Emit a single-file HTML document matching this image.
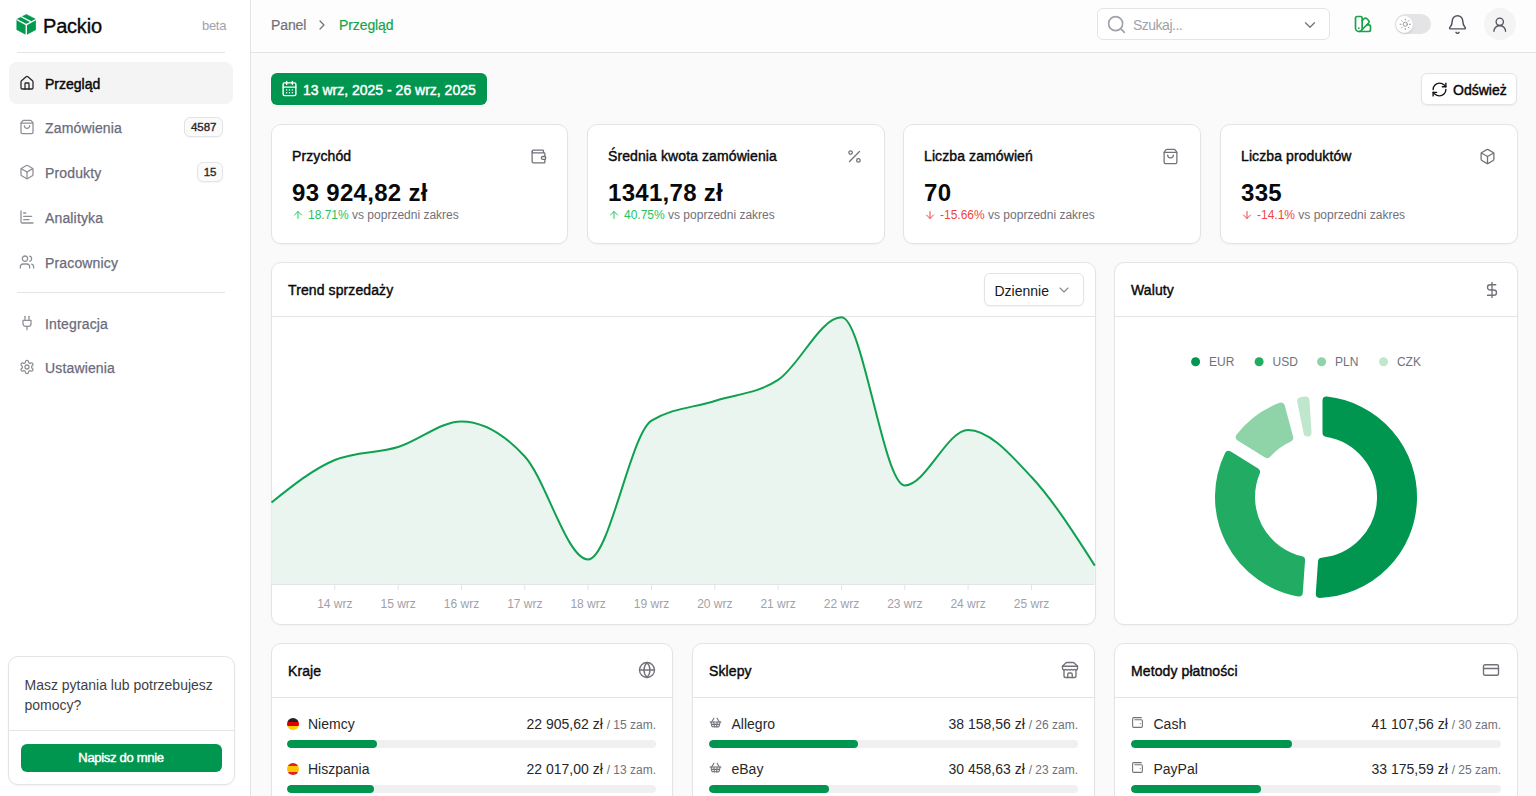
<!DOCTYPE html>
<html><head><meta charset="utf-8"><style>*{box-sizing:border-box;margin:0;padding:0}
html,body{width:1536px;height:796px;overflow:hidden}
body{font-family:"Liberation Sans",sans-serif;background:#fafafa;color:#09090b;position:relative}
.abs{position:absolute}
svg{display:block}
#sidebar{position:absolute;left:0;top:0;width:251px;height:796px;background:#fff;border-right:1px solid #e4e4e7}
.logo{left:43px;top:15px;font-size:20px;line-height:22px;white-space:nowrap;color:#09090b;-webkit-text-stroke:0.35px #09090b;letter-spacing:-0.2px}
.beta{left:202px;top:18px;font-size:13px;line-height:15px;color:#a1a1b0;letter-spacing:-0.3px}
.nav{position:absolute;left:9px;width:224px;height:42px;border-radius:8px;font-size:14px;color:#6b6b7b}
.nav .tx{position:absolute;left:36px;top:14px;line-height:16px;white-space:nowrap;letter-spacing:0.15px;-webkit-text-stroke:0.25px currentColor}
.nav.active{background:#f4f4f5;color:#09090b;font-weight:700}
.nav.active .tx{letter-spacing:0;font-weight:400;-webkit-text-stroke:0.45px #09090b}
.badge{position:absolute;right:10px;top:11px;height:20px;border:1px solid #e4e4e7;border-radius:6px;font-size:11.5px;line-height:19px;padding:0 5.5px;color:#27272a;background:#fafafa;-webkit-text-stroke:0.35px #27272a;box-shadow:0 1px 1px rgba(0,0,0,.04)}
.hr{position:absolute;left:17px;width:208px;height:1px;background:#e4e4e7}
.help{position:absolute;left:7.5px;top:656px;width:227px;height:129px;border:1px solid #e4e4e7;border-radius:10px;background:#fff;box-shadow:0 1px 2px rgba(0,0,0,.05)}
.htxt{left:16px;top:18px;font-size:14px;line-height:20px;color:#3f3f46;width:200px}
.hbtn{left:12px;top:87px;width:201px;height:28px;border-radius:6px;background:#00964f;color:#fff;font-weight:700;font-size:13px;line-height:28px;text-align:center;letter-spacing:-0.3px;font-weight:400;-webkit-text-stroke:0.45px #fff}
#header{position:absolute;left:251px;top:0;right:0;height:53px;background:#fdfdfd;border-bottom:1px solid #e4e4e7}
.crumb{top:16.5px;font-size:14px;line-height:16px;white-space:nowrap;-webkit-text-stroke:0.2px currentColor;letter-spacing:-0.1px}
.search{left:846px;top:8px;width:233px;height:32px;border:1px solid #e4e4e7;border-radius:6px;background:#fff}
.srch{left:882px;top:17px;font-size:14px;line-height:16px;color:#a1a1aa;letter-spacing:-0.5px}
.toggle{left:1144px;top:14px;width:36px;height:20px;border-radius:10px;background:#e4e4e7}
.knob{position:absolute;left:1px;top:1.5px;width:17px;height:17px;border-radius:50%;background:#fff;box-shadow:0 1px 2px rgba(0,0,0,.15)}
.avatar{left:1233px;top:8px;width:32px;height:32px;border-radius:50%;background:#f4f4f5}
.datebtn{left:271px;top:73px;width:216px;height:32px;border-radius:6px;background:#00964f;box-shadow:0 0 0 1px #fff,0 1px 3px rgba(0,0,0,.08);color:#fff;font-weight:700;font-size:14px;line-height:32px;white-space:nowrap}
.datebtn span{position:absolute;left:32px;top:1px;letter-spacing:0;font-weight:400;-webkit-text-stroke:0.45px #fff}
.refbtn{left:1420.5px;top:73px;width:96.5px;box-shadow:0 1px 2px rgba(0,0,0,.06);height:32px;border-radius:6px;border:1px solid #e4e4e7;background:#fff;font-weight:700;font-size:14px;line-height:30px;white-space:nowrap;color:#09090b}
.refbtn span{position:absolute;left:31.5px;top:1px;letter-spacing:0;font-weight:400;-webkit-text-stroke:0.45px #09090b}
.card{position:absolute;background:#fff;border:1px solid #e4e4e7;border-radius:10px;box-shadow:0 1px 2px rgba(0,0,0,.04)}
.stat .t{position:absolute;left:20px;top:23px;font-size:14px;font-weight:400;-webkit-text-stroke:0.4px currentColor;letter-spacing:0.1px;white-space:nowrap;line-height:16px}
.stat .v{position:absolute;left:20px;top:54px;font-size:24px;font-weight:700;white-space:nowrap;line-height:28px;letter-spacing:0.3px}
.stat .s{position:absolute;left:36px;top:83px;font-size:12px;white-space:nowrap;line-height:14px;color:#71717a}
.up{color:#22c55e}.down{color:#ef4444}
.ch{position:absolute;left:0;right:0;top:0;height:54px;border-bottom:1px solid #e4e4e7}
.ch .t{position:absolute;left:16px;top:19px;font-size:14px;font-weight:400;-webkit-text-stroke:0.4px currentColor;letter-spacing:0.1px;line-height:16px;white-space:nowrap}
.dd{left:712px;top:10px;width:100px;height:33px;border:1px solid #e4e4e7;border-radius:6px;font-size:14px;line-height:34px;padding-left:9.5px;box-shadow:0 1px 2px rgba(0,0,0,.05);background:#fff;color:#18181b}
.row{position:absolute;left:15px;right:16px;height:40px}
.row .nm{position:absolute;left:21px;top:0;font-size:14px;line-height:16px;color:#27272a;white-space:nowrap}
.row .fl{position:absolute;left:0;top:1.5px;width:12px;height:12px;border-radius:50%;overflow:hidden}
.row .val{position:absolute;right:0;top:0;font-size:14px;line-height:16px;color:#27272a;white-space:nowrap}
.row .val small{font-size:12px;color:#71717a}
.row .bar{position:absolute;left:0;right:0;top:24px;height:8px;border-radius:4px;background:#f0f0f1;overflow:hidden}
.row .bar i{position:absolute;left:0;top:0;bottom:0;background:#00964f;border-radius:4px}
.row.ri .nm{left:22.5px}
.row.ri{left:16px}
</style></head><body>
<div id="sidebar">
<svg class="abs" style="left:16px;top:14px" width="20" height="21" viewBox="0 0 20 21">
 <path d="M10.3 0.4L19.8 5.3V15.7L10.3 20.7L0.8 15.7V5.3Z" fill="#019a4f" stroke="#019a4f" stroke-width="0.6" stroke-linejoin="round"/>
 <path d="M0.6 5.5L10.3 10.6L20 5.5M10.3 10.6V21" fill="none" stroke="#fff" stroke-width="1.4"/>
 <path d="M4.9 2.5L15.2 7.9" fill="none" stroke="#fff" stroke-width="1.3"/>
</svg>
<div class="abs logo">Packio</div>
<div class="abs beta">beta</div>
<div class="hr" style="top:52px"></div>
<div class="nav active" style="top:62px"><svg class="abs" style="left:9.5px;top:13px" width="16" height="16" viewBox="0 0 24 24" fill="none" stroke="#27272a" stroke-width="1.9" stroke-linecap="round" stroke-linejoin="round"><path d="M15 21v-8a1 1 0 0 0-1-1h-4a1 1 0 0 0-1 1v8"/><path d="M3 10a2 2 0 0 1 .709-1.528l7-5.999a2 2 0 0 1 2.582 0l7 5.999A2 2 0 0 1 21 10v9a2 2 0 0 1-2 2H5a2 2 0 0 1-2-2z"/></svg><span class="tx">Przegląd</span></div>
<div class="nav" style="top:106px"><svg class="abs" style="left:9.5px;top:13px" width="16" height="16" viewBox="0 0 24 24" fill="none" stroke="#8e8e96" stroke-width="1.9" stroke-linecap="round" stroke-linejoin="round"><path d="M16 10a4 4 0 0 1-8 0"/><path d="M3.103 6.034h17.794"/><path d="M3.4 5.467a2 2 0 0 0-.4 1.2V20a2 2 0 0 0 2 2h14a2 2 0 0 0 2-2V6.667a2 2 0 0 0-.4-1.2l-2-2.667A2 2 0 0 0 17 2H7a2 2 0 0 0-1.6.8z"/></svg><span class="tx">Zamówienia</span><span class="badge">4587</span></div>
<div class="nav" style="top:151px"><svg class="abs" style="left:9.5px;top:13px" width="16" height="16" viewBox="0 0 24 24" fill="none" stroke="#8e8e96" stroke-width="1.9" stroke-linecap="round" stroke-linejoin="round"><path d="M21 8a2 2 0 0 0-1-1.73l-7-4a2 2 0 0 0-2 0l-7 4A2 2 0 0 0 3 8v8a2 2 0 0 0 1 1.73l7 4a2 2 0 0 0 2 0l7-4A2 2 0 0 0 21 16Z"/><path d="m3.3 7 8.7 5 8.7-5"/><path d="M12 22V12"/></svg><span class="tx">Produkty</span><span class="badge">15</span></div>
<div class="nav" style="top:196px"><svg class="abs" style="left:9.5px;top:13px" width="16" height="16" viewBox="0 0 24 24" fill="none" stroke="#8e8e96" stroke-width="1.9" stroke-linecap="round" stroke-linejoin="round"><path d="M3 3v16a2 2 0 0 0 2 2h16"/><path d="M7 16h8"/><path d="M7 11h12"/><path d="M7 6h3"/></svg><span class="tx">Analityka</span></div>
<div class="nav" style="top:241px"><svg class="abs" style="left:9.5px;top:13px" width="16" height="16" viewBox="0 0 24 24" fill="none" stroke="#8e8e96" stroke-width="1.9" stroke-linecap="round" stroke-linejoin="round"><path d="M16 21v-2a4 4 0 0 0-4-4H6a4 4 0 0 0-4 4v2"/><circle cx="9" cy="7" r="4"/><path d="M22 21v-2a4 4 0 0 0-3-3.87"/><path d="M16 3.13a4 4 0 0 1 0 7.75"/></svg><span class="tx">Pracownicy</span></div>
<div class="nav" style="top:302px"><svg class="abs" style="left:9.5px;top:13px" width="16" height="16" viewBox="0 0 24 24" fill="none" stroke="#8e8e96" stroke-width="1.9" stroke-linecap="round" stroke-linejoin="round"><path d="M12 22v-5"/><path d="M9 8V2"/><path d="M15 8V2"/><path d="M18 8v5a4 4 0 0 1-4 4h-4a4 4 0 0 1-4-4V8Z"/></svg><span class="tx">Integracja</span></div>
<div class="nav" style="top:346px"><svg class="abs" style="left:9.5px;top:13px" width="16" height="16" viewBox="0 0 24 24" fill="none" stroke="#8e8e96" stroke-width="1.9" stroke-linecap="round" stroke-linejoin="round"><path d="M12.22 2h-.44a2 2 0 0 0-2 2v.18a2 2 0 0 1-1 1.73l-.43.25a2 2 0 0 1-2 0l-.15-.08a2 2 0 0 0-2.73.73l-.22.38a2 2 0 0 0 .73 2.73l.15.1a2 2 0 0 1 1 1.72v.51a2 2 0 0 1-1 1.74l-.15.09a2 2 0 0 0-.73 2.73l.22.38a2 2 0 0 0 2.73.73l.15-.08a2 2 0 0 1 2 0l.43.25a2 2 0 0 1 1 1.73V20a2 2 0 0 0 2 2h.44a2 2 0 0 0 2-2v-.18a2 2 0 0 1 1-1.73l.43-.25a2 2 0 0 1 2 0l.15.08a2 2 0 0 0 2.73-.73l.22-.39a2 2 0 0 0-.73-2.73l-.15-.08a2 2 0 0 1-1-1.74v-.5a2 2 0 0 1 1-1.74l.15-.09a2 2 0 0 0 .73-2.730l-.22-.38a2 2 0 0 0-2.73-.73l-.15.08a2 2 0 0 1-2 0l-.43-.25a2 2 0 0 1-1-1.73V4a2 2 0 0 0-2-2z"/><circle cx="12" cy="12" r="3"/></svg><span class="tx">Ustawienia</span></div>
<div class="hr" style="top:292px"></div>
<div class="help">
 <div class="abs htxt">Masz pytania lub potrzebujesz pomocy?</div>
 <div class="abs" style="left:0;right:0;top:73px;height:1px;background:#e4e4e7"></div>
 <div class="abs hbtn">Napisz do mnie</div>
</div>
</div>
<div id="header">
<div class="abs crumb" style="left:20px;color:#71717a">Panel</div>
<svg class="abs" style="left:63px;top:17px" width="16" height="16" viewBox="0 0 24 24" fill="none" stroke="#71717a" stroke-width="1.8" stroke-linecap="round" stroke-linejoin="round"><path d="m9 18 6-6-6-6"/></svg>
<div class="abs crumb" style="left:88px;color:#16a34a">Przegląd</div>
<div class="abs search"></div>
<svg class="abs" style="left:854.5px;top:13.5px" width="21" height="21" viewBox="0 0 24 24" fill="none" stroke="#a1a1aa" stroke-width="1.9" stroke-linecap="round" stroke-linejoin="round"><circle cx="11" cy="11" r="8"/><path d="m21 21-4.3-4.3"/></svg>
<div class="abs srch">Szukaj...</div>
<svg class="abs" style="left:1050px;top:16px" width="18" height="18" viewBox="0 0 24 24" fill="none" stroke="#71717a" stroke-width="1.6" stroke-linecap="round" stroke-linejoin="round"><path d="m6 9 6 6 6-6"/></svg>
<svg class="abs" style="left:1102px;top:14px" width="20" height="20" viewBox="0 0 24 24" fill="none" stroke="#16a34a" stroke-width="2" stroke-linecap="round" stroke-linejoin="round"><path d="M11 17a4 4 0 0 1-8 0V5a2 2 0 0 1 2-2h4a2 2 0 0 1 2 2Z"/><path d="M16.7 13H19a2 2 0 0 1 2 2v4a2 2 0 0 1-2 2H7"/><path d="M7 17h.01"/><path d="m11 8 2.3-2.3a2.4 2.4 0 0 1 3.404.004L18.6 7.6a2.4 2.4 0 0 1 .026 3.434L9.9 19.8"/></svg>
<div class="abs toggle"><div class="knob"></div></div>
<svg class="abs" style="left:1147.5px;top:17.5px" width="12.5" height="12.5" viewBox="0 0 24 24" fill="none" stroke="#8a8a93" stroke-width="1.7" stroke-linecap="round" stroke-linejoin="round"><circle cx="12" cy="12" r="4"/><path d="M12 2v2"/><path d="M12 20v2"/><path d="m4.93 4.93 1.41 1.41"/><path d="m17.66 17.66 1.41 1.41"/><path d="M2 12h2"/><path d="M20 12h2"/><path d="m6.34 17.66-1.41 1.41"/><path d="m19.07 4.93-1.41 1.41"/></svg>
<svg class="abs" style="left:1196px;top:13.5px" width="21" height="21" viewBox="0 0 24 24" fill="none" stroke="#52525b" stroke-width="1.7" stroke-linecap="round" stroke-linejoin="round"><path d="M10.268 21a2 2 0 0 0 3.464 0"/><path d="M3.262 15.326A1 1 0 0 0 4 17h16a1 1 0 0 0 .74-1.673C19.410 13.956 18 12.499 18 8A6 6 0 0 0 6 8c0 4.499-1.411 5.956-2.738 7.326"/></svg>
<div class="abs avatar"></div>
<svg class="abs" style="left:1240.25px;top:15.5px" width="17.5" height="17.5" viewBox="0 0 24 24" fill="none" stroke="#52525b" stroke-width="1.8" stroke-linecap="round" stroke-linejoin="round"><circle cx="12" cy="8" r="5"/><path d="M20 21a8 8 0 0 0-16 0"/></svg>
</div>
<div class="abs datebtn"><svg class="abs" style="left:10px;top:7px" width="17" height="17" viewBox="0 0 24 24" fill="none" stroke="#fff" stroke-width="2" stroke-linecap="round" stroke-linejoin="round"><rect width="18" height="18" x="3" y="4" rx="2"/><path d="M8 2v4"/><path d="M16 2v4"/><path d="M3 10h18"/><path d="M8 14h.01"/><path d="M12 14h.01"/><path d="M16 14h.01"/><path d="M8 18h.01"/><path d="M12 18h.01"/><path d="M16 18h.01"/></svg><span>13 wrz, 2025 - 26 wrz, 2025</span></div>
<div class="abs refbtn"><svg class="abs" style="left:9px;top:6.5px" width="17" height="17" viewBox="0 0 24 24" fill="none" stroke="#18181b" stroke-width="2" stroke-linecap="round" stroke-linejoin="round"><path d="M3 12a9 9 0 0 1 9-9 9.75 9.75 0 0 1 6.74 2.74L21 8"/><path d="M21 3v5h-5"/><path d="M21 12a9 9 0 0 1-9 9 9.75 9.75 0 0 1-6.74-2.74L3 16"/><path d="M8 16H3v5"/></svg><span>Odśwież</span></div>
<div class="card stat" style="left:271px;top:124px;width:297px;height:120px"><div class="t">Przychód</div><svg class="abs" style="left:258px;top:23px" width="17" height="17" viewBox="0 0 24 24" fill="none" stroke="#71717a" stroke-width="1.8" stroke-linecap="round" stroke-linejoin="round"><path d="M19 7V4a1 1 0 0 0-1-1H5a2 2 0 0 0 0 4h15a1 1 0 0 1 1 1v4h-3a2 2 0 0 0 0 4h3a1 1 0 0 0 1-1v-2a1 1 0 0 0-1-1"/><path d="M3 5v14a2 2 0 0 0 2 2h15a1 1 0 0 0 1-1v-4"/></svg><div class="v">93 924,82 zł</div><svg class="abs" style="left:20px;top:84px" width="12" height="12" viewBox="0 0 24 24" fill="none" stroke="#22c55e" stroke-width="2" stroke-linecap="round" stroke-linejoin="round"><path d="m5 12 7-7 7 7"/><path d="M12 19V5"/></svg><div class="s"><span class="up">18.71%</span> vs poprzedni zakres</div></div>
<div class="card stat" style="left:587px;top:124px;width:298px;height:120px"><div class="t">Średnia kwota zamówienia</div><svg class="abs" style="left:258px;top:23px" width="17" height="17" viewBox="0 0 24 24" fill="none" stroke="#71717a" stroke-width="1.8" stroke-linecap="round" stroke-linejoin="round"><line x1="19" x2="5" y1="5" y2="19"/><circle cx="6.5" cy="6.5" r="2.5"/><circle cx="17.5" cy="17.5" r="2.5"/></svg><div class="v">1341,78 zł</div><svg class="abs" style="left:20px;top:84px" width="12" height="12" viewBox="0 0 24 24" fill="none" stroke="#22c55e" stroke-width="2" stroke-linecap="round" stroke-linejoin="round"><path d="m5 12 7-7 7 7"/><path d="M12 19V5"/></svg><div class="s"><span class="up">40.75%</span> vs poprzedni zakres</div></div>
<div class="card stat" style="left:903px;top:124px;width:298px;height:120px"><div class="t">Liczba zamówień</div><svg class="abs" style="left:258px;top:23px" width="17" height="17" viewBox="0 0 24 24" fill="none" stroke="#71717a" stroke-width="1.8" stroke-linecap="round" stroke-linejoin="round"><path d="M16 10a4 4 0 0 1-8 0"/><path d="M3.103 6.034h17.794"/><path d="M3.4 5.467a2 2 0 0 0-.4 1.2V20a2 2 0 0 0 2 2h14a2 2 0 0 0 2-2V6.667a2 2 0 0 0-.4-1.2l-2-2.667A2 2 0 0 0 17 2H7a2 2 0 0 0-1.6.8z"/></svg><div class="v">70</div><svg class="abs" style="left:20px;top:84px" width="12" height="12" viewBox="0 0 24 24" fill="none" stroke="#ef4444" stroke-width="2" stroke-linecap="round" stroke-linejoin="round"><path d="M12 5v14"/><path d="m19 12-7 7-7-7"/></svg><div class="s"><span class="down">-15.66%</span> vs poprzedni zakres</div></div>
<div class="card stat" style="left:1220px;top:124px;width:298px;height:120px"><div class="t">Liczba produktów</div><svg class="abs" style="left:258px;top:23px" width="17" height="17" viewBox="0 0 24 24" fill="none" stroke="#71717a" stroke-width="1.8" stroke-linecap="round" stroke-linejoin="round"><path d="M21 8a2 2 0 0 0-1-1.73l-7-4a2 2 0 0 0-2 0l-7 4A2 2 0 0 0 3 8v8a2 2 0 0 0 1 1.73l7 4a2 2 0 0 0 2 0l7-4A2 2 0 0 0 21 16Z"/><path d="m3.3 7 8.7 5 8.7-5"/><path d="M12 22V12"/></svg><div class="v">335</div><svg class="abs" style="left:20px;top:84px" width="12" height="12" viewBox="0 0 24 24" fill="none" stroke="#ef4444" stroke-width="2" stroke-linecap="round" stroke-linejoin="round"><path d="M12 5v14"/><path d="m19 12-7 7-7-7"/></svg><div class="s"><span class="down">-14.1%</span> vs poprzedni zakres</div></div>
<div class="card" style="left:271px;top:262px;width:825px;height:363px"><div class="ch"><div class="t">Trend sprzedaży</div></div>
<div class="abs dd">Dziennie</div><svg class="abs" style="left:784px;top:19px" width="16" height="16" viewBox="0 0 24 24" fill="none" stroke="#8a8a93" stroke-width="1.6" stroke-linecap="round" stroke-linejoin="round"><path d="m6 9 6 6 6-6"/></svg>
</div>
<svg class="abs" style="left:0;top:0" width="1536" height="796">
  <path d="M271.5,502.5C292.6,485.6,313.7,468.7,334.8,460.0C355.9,451.3,377.0,453.4,398.2,447.0C419.3,440.6,440.4,421.4,461.5,421.4C482.6,421.4,503.7,433.5,524.8,456.5C545.9,479.5,567.0,559.4,588.1,559.4C609.3,559.4,630.4,433.8,651.5,420.7C672.6,407.6,693.7,407.8,714.8,401.0C735.9,394.2,757.0,393.8,778.1,379.9C799.2,365.9,820.4,317.3,841.5,317.3C862.6,317.3,883.7,485.4,904.8,485.4C925.9,485.4,947.0,430.0,968.1,430.0C989.2,430.0,1010.4,454.4,1031.5,477.0C1052.6,499.6,1073.7,532.6,1094.8,565.6L1094.8,584L271.5,584Z" fill="#eaf5ef"/>
  <line x1="272" y1="584.5" x2="1094" y2="584.5" stroke="#e4e4e7" stroke-width="1"/>
  <line x1="334.8" y1="584" x2="334.8" y2="590" stroke="#e4e4e7" stroke-width="1"/><line x1="398.2" y1="584" x2="398.2" y2="590" stroke="#e4e4e7" stroke-width="1"/><line x1="461.5" y1="584" x2="461.5" y2="590" stroke="#e4e4e7" stroke-width="1"/><line x1="524.8" y1="584" x2="524.8" y2="590" stroke="#e4e4e7" stroke-width="1"/><line x1="588.1" y1="584" x2="588.1" y2="590" stroke="#e4e4e7" stroke-width="1"/><line x1="651.5" y1="584" x2="651.5" y2="590" stroke="#e4e4e7" stroke-width="1"/><line x1="714.8" y1="584" x2="714.8" y2="590" stroke="#e4e4e7" stroke-width="1"/><line x1="778.1" y1="584" x2="778.1" y2="590" stroke="#e4e4e7" stroke-width="1"/><line x1="841.5" y1="584" x2="841.5" y2="590" stroke="#e4e4e7" stroke-width="1"/><line x1="904.8" y1="584" x2="904.8" y2="590" stroke="#e4e4e7" stroke-width="1"/><line x1="968.1" y1="584" x2="968.1" y2="590" stroke="#e4e4e7" stroke-width="1"/><line x1="1031.5" y1="584" x2="1031.5" y2="590" stroke="#e4e4e7" stroke-width="1"/>
  <path d="M271.5,502.5C292.6,485.6,313.7,468.7,334.8,460.0C355.9,451.3,377.0,453.4,398.2,447.0C419.3,440.6,440.4,421.4,461.5,421.4C482.6,421.4,503.7,433.5,524.8,456.5C545.9,479.5,567.0,559.4,588.1,559.4C609.3,559.4,630.4,433.8,651.5,420.7C672.6,407.6,693.7,407.8,714.8,401.0C735.9,394.2,757.0,393.8,778.1,379.9C799.2,365.9,820.4,317.3,841.5,317.3C862.6,317.3,883.7,485.4,904.8,485.4C925.9,485.4,947.0,430.0,968.1,430.0C989.2,430.0,1010.4,454.4,1031.5,477.0C1052.6,499.6,1073.7,532.6,1094.8,565.6" fill="none" stroke="#0fa050" stroke-width="2"/>
  <g font-family="Liberation Sans" font-size="12" fill="#a1a1aa"><text x="334.8" y="608" text-anchor="middle">14 wrz</text><text x="398.2" y="608" text-anchor="middle">15 wrz</text><text x="461.5" y="608" text-anchor="middle">16 wrz</text><text x="524.8" y="608" text-anchor="middle">17 wrz</text><text x="588.1" y="608" text-anchor="middle">18 wrz</text><text x="651.5" y="608" text-anchor="middle">19 wrz</text><text x="714.8" y="608" text-anchor="middle">20 wrz</text><text x="778.1" y="608" text-anchor="middle">21 wrz</text><text x="841.5" y="608" text-anchor="middle">22 wrz</text><text x="904.8" y="608" text-anchor="middle">23 wrz</text><text x="968.1" y="608" text-anchor="middle">24 wrz</text><text x="1031.5" y="608" text-anchor="middle">25 wrz</text></g>
</svg>
<div class="card" style="left:1114px;top:262px;width:404px;height:363px"><div class="ch"><div class="t">Waluty</div><svg class="abs" style="left:368px;top:18px" width="18" height="18" viewBox="0 0 24 24" fill="none" stroke="#71717a" stroke-width="1.8" stroke-linecap="round" stroke-linejoin="round"><line x1="12" x2="12" y1="2" y2="22"/><path d="M17 5H9.5a3.5 3.5 0 0 0 0 7h5a3.5 3.5 0 0 1 0 7H6"/></svg></div></div>
<svg class="abs" style="left:0;top:0" width="1536" height="796"><path d="M1326.50,400.57A97,97 0 0 1 1319.75,593.93L1322.00,561.72A65,65 0 0 0 1326.50,432.85Z" fill="#00964f" stroke="#00964f" stroke-width="8" stroke-linejoin="round"/>
<path d="M1298.80,592.46A97,97 0 0 1 1228.66,454.80L1256.04,471.91A65,65 0 0 0 1301.05,560.26Z" fill="#21ab63" stroke="#21ab63" stroke-width="8" stroke-linejoin="round"/>
<path d="M1239.79,437.00A97,97 0 0 1 1280.90,406.57L1289.26,437.76A65,65 0 0 0 1267.16,454.10Z" fill="#8fd3a9" stroke="#8fd3a9" stroke-width="8" stroke-linejoin="round"/>
<path d="M1301.18,401.14A97,97 0 0 1 1305.50,400.57L1307.52,432.56A65,65 0 0 0 1307.52,432.56Z" fill="#c0e6cd" stroke="#c0e6cd" stroke-width="8" stroke-linejoin="round"/>
<circle cx="1195.6" cy="361.7" r="4.5" fill="#00964f"/><text x="1209.0" y="366.2" font-family="Liberation Sans" font-size="12" fill="#6b7280">EUR</text><circle cx="1259.1" cy="361.7" r="4.5" fill="#21ab63"/><text x="1272.5" y="366.2" font-family="Liberation Sans" font-size="12" fill="#6b7280">USD</text><circle cx="1321.6" cy="361.7" r="4.5" fill="#8fd3a9"/><text x="1335.0" y="366.2" font-family="Liberation Sans" font-size="12" fill="#6b7280">PLN</text><circle cx="1383.5" cy="361.7" r="4.5" fill="#c0e6cd"/><text x="1396.9" y="366.2" font-family="Liberation Sans" font-size="12" fill="#6b7280">CZK</text></svg>
<div class="card" style="left:271px;top:643px;width:402px;height:200px"><div class="ch"><div class="t">Kraje</div><svg class="abs" style="left:366px;top:17px" width="18" height="18" viewBox="0 0 24 24" fill="none" stroke="#71717a" stroke-width="1.8" stroke-linecap="round" stroke-linejoin="round"><circle cx="12" cy="12" r="10"/><path d="M12 2a14.5 14.5 0 0 0 0 20 14.5 14.5 0 0 0 0-20"/><path d="M2 12h20"/></svg></div><div class="row" style="top:72px"><span class="fl" style="background:linear-gradient(#222 34%,#dd0000 34%,#dd0000 66%,#ffce00 66%)"></span><span class="nm">Niemcy</span><span class="val">22 905,62 zł <small>/ 15 zam.</small></span><div class="bar"><i style="width:24.4%"></i></div></div><div class="row" style="top:117px"><span class="fl" style="background:linear-gradient(#dd2222 28%,#ffc400 28%,#ffc400 72%,#dd2222 72%)"></span><span class="nm">Hiszpania</span><span class="val">22 017,00 zł <small>/ 13 zam.</small></span><div class="bar"><i style="width:23.5%"></i></div></div></div>
<div class="card" style="left:692px;top:643px;width:403px;height:200px"><div class="ch"><div class="t">Sklepy</div><svg class="abs" style="left:368px;top:17px" width="18" height="18" viewBox="0 0 24 24" fill="none" stroke="#71717a" stroke-width="1.8" stroke-linecap="round" stroke-linejoin="round"><path d="m2 7 4.41-4.41A2 2 0 0 1 7.83 2h8.34a2 2 0 0 1 1.42.59L22 7"/><path d="M4 12v8a2 2 0 0 0 2 2h12a2 2 0 0 0 2-2v-8"/><path d="M15 22v-4a2 2 0 0 0-2-2h-2a2 2 0 0 0-2 2v4"/><path d="M2 7h20"/><path d="M22 7v3a2 2 0 0 1-2 2a2.7 2.7 0 0 1-1.59-.63.7.7 0 0 0-.82 0A2.7 2.7 0 0 1 16 12a2.7 2.7 0 0 1-1.59-.63.7.7 0 0 0-.82 0A2.7 2.7 0 0 1 12 12a2.7 2.7 0 0 1-1.59-.63.7.7 0 0 0-.82 0A2.7 2.7 0 0 1 8 12a2.7 2.7 0 0 1-1.59-.63.7.7 0 0 0-.82 0A2.7 2.7 0 0 1 4 12a2 2 0 0 1-2-2V7"/></svg></div><div class="row ri" style="top:72px"><svg class="abs" style="left:0px;top:0px" width="13" height="13" viewBox="0 0 24 24" fill="none" stroke="#71717a" stroke-width="2" stroke-linecap="round" stroke-linejoin="round"><path d="m15 11-1 9"/><path d="m19 11-4-7"/><path d="M2 11h20"/><path d="m3.5 11 1.6 7.4a2 2 0 0 0 2 1.6h9.8a2 2 0 0 0 2-1.6l1.7-7.4"/><path d="M4.5 15.5h15"/><path d="m5 11 4-7"/><path d="m9 11 1 9"/></svg><span class="nm">Allegro</span><span class="val">38 158,56 zł <small>/ 26 zam.</small></span><div class="bar"><i style="width:40.5%"></i></div></div><div class="row ri" style="top:117px"><svg class="abs" style="left:0px;top:0px" width="13" height="13" viewBox="0 0 24 24" fill="none" stroke="#71717a" stroke-width="2" stroke-linecap="round" stroke-linejoin="round"><path d="m15 11-1 9"/><path d="m19 11-4-7"/><path d="M2 11h20"/><path d="m3.5 11 1.6 7.4a2 2 0 0 0 2 1.6h9.8a2 2 0 0 0 2-1.6l1.7-7.4"/><path d="M4.5 15.5h15"/><path d="m5 11 4-7"/><path d="m9 11 1 9"/></svg><span class="nm">eBay</span><span class="val">30 458,63 zł <small>/ 23 zam.</small></span><div class="bar"><i style="width:32.4%"></i></div></div></div>
<div class="card" style="left:1114px;top:643px;width:404px;height:200px"><div class="ch"><div class="t">Metody płatności</div><svg class="abs" style="left:367px;top:17px" width="18" height="18" viewBox="0 0 24 24" fill="none" stroke="#71717a" stroke-width="1.8" stroke-linecap="round" stroke-linejoin="round"><rect width="20" height="14" x="2" y="5" rx="2"/><line x1="2" x2="22" y1="10" y2="10"/></svg></div><div class="row ri" style="top:72px"><svg class="abs" style="left:0px;top:0px" width="13" height="13" viewBox="0 0 24 24" fill="none" stroke="#71717a" stroke-width="2" stroke-linecap="round" stroke-linejoin="round"><path d="M17 14h.01"/><path d="M7 7h12a2 2 0 0 1 2 2v10a2 2 0 0 1-2 2H5a2 2 0 0 1-2-2V5a2 2 0 0 1 2-2h14"/></svg><span class="nm">Cash</span><span class="val">41 107,56 zł <small>/ 30 zam.</small></span><div class="bar"><i style="width:43.5%"></i></div></div><div class="row ri" style="top:117px"><svg class="abs" style="left:0px;top:0px" width="13" height="13" viewBox="0 0 24 24" fill="none" stroke="#71717a" stroke-width="2" stroke-linecap="round" stroke-linejoin="round"><path d="M17 14h.01"/><path d="M7 7h12a2 2 0 0 1 2 2v10a2 2 0 0 1-2 2H5a2 2 0 0 1-2-2V5a2 2 0 0 1 2-2h14"/></svg><span class="nm">PayPal</span><span class="val">33 175,59 zł <small>/ 25 zam.</small></span><div class="bar"><i style="width:35.2%"></i></div></div></div>
</body></html>
